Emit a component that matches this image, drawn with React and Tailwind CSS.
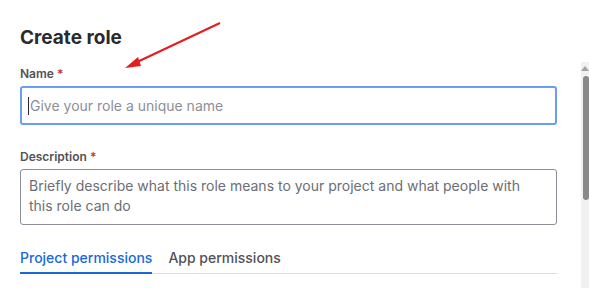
const App = () => {
  return (
    <div
      className="relative w-[589px] h-[288px] overflow-hidden bg-white flex"
      style={{ fontFamily: "Inter, 'Noto Sans', sans-serif" }}
    >
      <div className="ml-5 w-[537px] pt-[26px]">
        <h1 className="text-[19px] leading-6 font-bold text-[#292a2e]">Create role</h1>

        <div className="mt-[16px]">
          <label className="block text-[12px] leading-4 font-semibold text-[#505258]">
            Name <span className="text-[#c9372c]">*</span>
          </label>
          <div className="mt-1 h-[39px] rounded-[3px] border-2 border-[#6a9ff0] flex items-center px-[6px]">
            <span className="w-px h-[18px] bg-[#292a2e] mr-px" />
            <span className="text-[14px] text-[#8c8f97]">Give your role a unique name</span>
          </div>
        </div>

        <div className="mt-[24px]">
          <label className="block text-[12px] leading-4 font-semibold text-[#505258]">
            Description <span className="text-[#c9372c]">*</span>
          </label>
          <div className="mt-[4px] h-[56px] rounded-[3px] border border-[#8c8f97] pl-2 pr-[30px] pt-[6px] text-[14px] leading-5 text-[#6b6e76]">
            Briefly describe what this role means to your project and what people with this role can do
          </div>
        </div>

        <div className="mt-[23px] flex gap-4 border-b border-[#dddee1] text-[14px] leading-5 font-medium">
          <div className="pb-[4px] border-b-2 border-[#1868db] -mb-px text-[#1868db]">Project permissions</div>
          <div className="pb-[4px] text-[#505258]">App permissions</div>
        </div>
      </div>

      <div className="ml-[24px] mt-[62px] w-2 bg-[#f1f1f1] flex flex-col items-center">
        <div className="mt-[4px] w-0 h-0 border-l-[4px] border-r-[4px] border-b-[5px] border-l-transparent border-r-transparent border-b-[#a3a3a3]" />
        <div className="mt-[5px] w-[6px] ml-[2px] h-[124px] rounded-[3px] bg-[#8a8a8a]" />
      </div>

      <svg className="absolute left-0 top-0 pointer-events-none" width="589" height="288">
        <line x1="220" y1="23" x2="135" y2="63" stroke="#e41e1e" strokeWidth="2" />
        <polygon points="125,68 138,57 141,66" fill="#e41e1e" />
      </svg>
    </div>
  );
};

export default App;
